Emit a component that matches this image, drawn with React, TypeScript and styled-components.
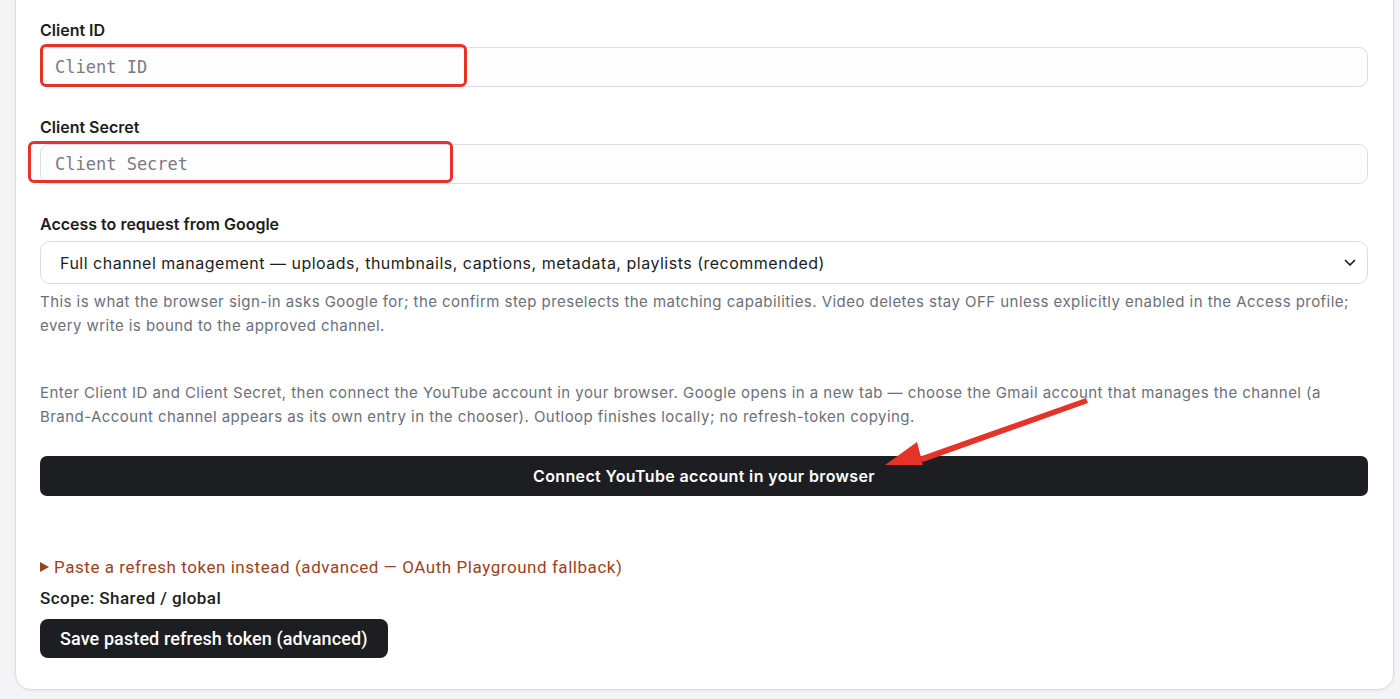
import React from "react";
import styled, { createGlobalStyle } from "styled-components";

const GlobalStyle = createGlobalStyle`
  html, body { margin: 0; padding: 0; background: #f3f4f6; overflow: hidden; }
  body { font-family: Inter, "Noto Sans", "Liberation Sans", sans-serif; color: #1c1d21; }
  * { box-sizing: border-box; }
`;

const Page = styled.div`
  padding: 0 6px 9px 15px;
`;

const Card = styled.section`
  position: relative;
  margin-top: -31px;
  background: #ffffff;
  border: 1px solid #f2d9c7;
  border-radius: 16px;
  box-shadow: 0 1px 3px rgba(0, 0, 0, 0.06);
  padding: 50px 25px 31px 24px;
  display: flex;
  flex-direction: column;
`;

const Field = styled.div<{ $mb?: number }>`
  position: relative;
  display: flex;
  flex-direction: column;
  margin-bottom: ${(p) => p.$mb ?? 30}px;
`;

const Label = styled.label`
  font-size: 16px;
  font-weight: 600;
  line-height: 20px;
  margin-bottom: 7px;
  color: #1c1d21;
`;

const TextInput = styled.input`
  height: 40px;
  width: 100%;
  border: 1px solid #dcdce4;
  border-radius: 9px;
  background: #fdfdfe;
  padding: 0 14px;
  font-family: "DejaVu Sans Mono", "Liberation Mono", monospace;
  font-size: 17px;
  color: #1c1d21;
  outline: none;
  &::placeholder { color: #7a7a82; }
`;

const SelectWrap = styled.div`
  position: relative;
  height: 43px;
`;

const Select = styled.select`
  appearance: none;
  width: 100%;
  height: 43px;
  border: 1px solid #dcdce4;
  border-radius: 10px;
  background: #ffffff;
  padding: 0 40px 0 19px;
  font-family: Inter, "Noto Sans", sans-serif;
  font-size: 16px;
  letter-spacing: 0.5px;
  color: #1c1d21;
  outline: none;
`;

const Chevron = styled.svg`
  position: absolute;
  right: 11px;
  top: 17px;
  pointer-events: none;
`;

const Help = styled.p`
  margin: 6px 0 0;
  font-size: 15px;
  letter-spacing: 0.45px;
  line-height: 24px;
  color: #6b6f7b;
`;

const Intro = styled.p`
  margin: 43px 0 0;
  font-size: 15px;
  letter-spacing: 0.45px;
  line-height: 24px;
  color: #6b6f7b;
`;

const PrimaryButton = styled.button<{ $full?: boolean }>`
  border: none;
  background: #1d1e22;
  color: #ffffff;
  font-family: ${(p) => (p.$full ? 'Inter, "Noto Sans", sans-serif' : 'Roboto, "Noto Sans", sans-serif')};
  font-weight: ${(p) => (p.$full ? 600 : 500)};
  font-size: ${(p) => (p.$full ? 16 : 18)}px;
  letter-spacing: ${(p) => (p.$full ? 0.35 : 0.1)}px;
  border-radius: ${(p) => (p.$full ? 7 : 8)}px;
  height: ${(p) => (p.$full ? 40 : 39)}px;
  width: ${(p) => (p.$full ? "100%" : "auto")};
  align-self: ${(p) => (p.$full ? "stretch" : "flex-start")};
  padding: 0 20px;
  cursor: pointer;
`;

const ConnectRow = styled.div`
  position: relative;
  margin-top: 27px;
  display: flex;
`;

const Details = styled.details`
  margin-top: 59px;
  font-family: Roboto, "Noto Sans", sans-serif;
  font-size: 17px;
  letter-spacing: 0.55px;
  line-height: 24px;
  color: #9c4221;
`;

const Summary = styled.summary`
  list-style: none;
  cursor: pointer;
  display: flex;
  align-items: center;
  gap: 5px;
  &::-webkit-details-marker { display: none; }
`;

const Tri = styled.span`
  width: 0;
  height: 0;
  border-top: 5.5px solid transparent;
  border-bottom: 5.5px solid transparent;
  border-left: 9px solid #9c4221;
`;

const Scope = styled.div`
  margin-top: 9px;
  margin-bottom: 11px;
  font-family: Roboto, "Noto Sans", sans-serif;
  font-size: 17px;
  font-weight: 500;
  letter-spacing: 0.45px;
  line-height: 20px;
  color: #1c1d21;
`;

const Highlight = styled.div<{ $left: number; $top: number; $w: number; $h: number }>`
  position: absolute;
  left: ${(p) => p.$left}px;
  top: ${(p) => p.$top}px;
  width: ${(p) => p.$w}px;
  height: ${(p) => p.$h}px;
  border: 3.5px solid #e6332a;
  border-radius: 6px;
  pointer-events: none;
`;

const Arrow = styled.svg`
  position: absolute;
  left: 805px;
  top: -60px;
  pointer-events: none;
  overflow: visible;
`;

export default function App() {
  return (
    <>
      <GlobalStyle />
      <Page>
        <Card>
          <Field>
            <Label>Client ID</Label>
            <TextInput placeholder="Client ID" />
            <Highlight $left={0} $top={24} $w={427} $h={43} />
          </Field>
          <Field>
            <Label>Client Secret</Label>
            <TextInput placeholder="Client Secret" />
            <Highlight $left={-12} $top={24} $w={425} $h={42} />
          </Field>
          <Field $mb={0}>
            <Label>Access to request from Google</Label>
            <SelectWrap>
              <Select defaultValue="full">
                <option value="full">
                  Full channel management — uploads, thumbnails, captions, metadata, playlists (recommended)
                </option>
              </Select>
              <Chevron width="14" height="10" viewBox="0 0 14 10">
                <path d="M2.5 2.5 L7 7 L11.5 2.5" fill="none" stroke="#1c1d21" strokeWidth="1.7" strokeLinecap="round" strokeLinejoin="round" />
              </Chevron>
            </SelectWrap>
            <Help>
              This is what the browser sign-in asks Google for; the confirm step preselects the matching capabilities. Video deletes stay OFF unless explicitly enabled in the Access profile; every write is bound to the approved channel.
            </Help>
          </Field>
          <Intro>
            Enter Client ID and Client Secret, then connect the YouTube account in your browser. Google opens in a new tab — choose the Gmail account that manages the channel (a Brand-Account channel appears as its own entry in the chooser). Outloop finishes locally; no refresh-token copying.
          </Intro>
          <ConnectRow>
            <PrimaryButton $full>Connect YouTube account in your browser</PrimaryButton>
            <Arrow width="250" height="80" viewBox="0 0 250 80">
              <polygon points="241,2 243,7 78,66 74,61" fill="#e6332a" />
              <polygon points="40,69 72,46 78,69" fill="#e6332a" />
            </Arrow>
          </ConnectRow>
          <Details>
            <Summary>
              <Tri />
              Paste a refresh token instead (advanced — OAuth Playground fallback)
            </Summary>
          </Details>
          <Scope>Scope: Shared / global</Scope>
          <PrimaryButton>Save pasted refresh token (advanced)</PrimaryButton>
        </Card>
      </Page>
    </>
  );
}
